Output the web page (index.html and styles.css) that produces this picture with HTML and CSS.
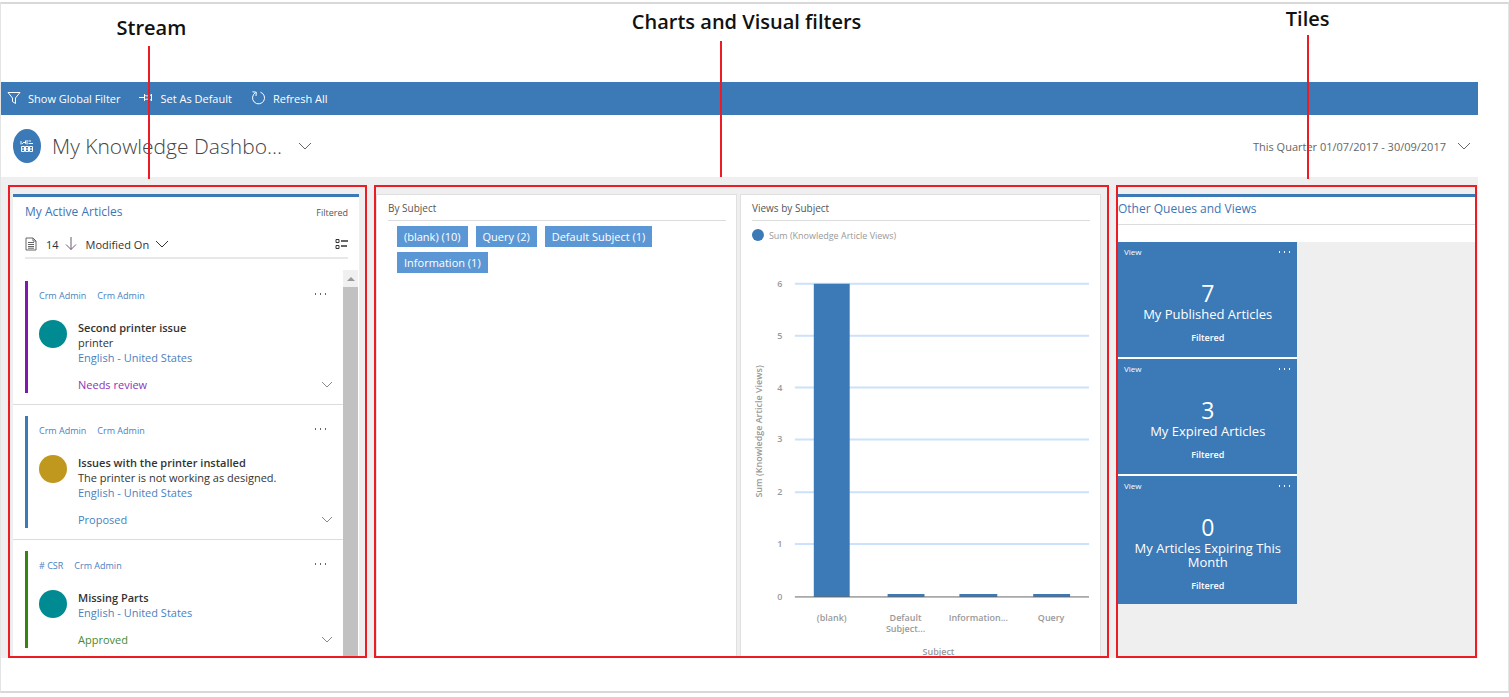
FILE: index.html
```html
<!DOCTYPE html>
<html lang="en">
<head>
<meta charset="utf-8">
<title>My Knowledge Dashboard</title>
<link rel="stylesheet" href="styles.css">
</head>
<body>
<div class="figure">
  <div class="app">
    <nav class="commands">
      <button class="command" type="button">
        <svg class="icon" width="14" height="14" viewBox="0 0 14 14"><path d="M1 1.500H13L8.500 7V12.500L5.500 10.500V7Z"/></svg>
        Show Global Filter
      </button>
      <button class="command" type="button">
        <svg class="icon" width="14" height="14" viewBox="0 0 14 14"><path d="M0 6.500H5M5.500 3V10M5.500 4C7 5.500 9 5 12 4M5.500 9C7 7.500 9 8 12 9M12.500 3V10"/></svg>
        Set As Default
      </button>
      <button class="command" type="button">
        <svg class="icon" width="15" height="16" viewBox="0 0 15 16"><path d="M9.500 2.200A6 6 0 1 1 4.500 2.700M1.500 1.800L5.300 2.200L5 6"/></svg>
        Refresh All
      </button>
    </nav>
    <header class="titlebar">
      <div class="badge">
        <svg width="14" height="14" viewBox="0 0 14 14"><path d="M1 2V5.500M2 5L4 3L5.500 4.500V1.500M7 1V5.500M8.500 2H11M8.500 4.500H13M1.500 7.500H4.500V12.500H1.500ZM5.500 7.500H8.500V12.500H5.500ZM9.500 7.500H12.500V12.500H9.500ZM1.500 10H12.500"/></svg>
      </div>
      <h1 class="title">My Knowledge Dashbo...</h1>
      <button class="chevron" type="button" aria-label="Switch dashboard"><svg width="14" height="8" viewBox="0 0 14 8"><path d="M1 1L7 7L13 1"/></svg></button>
      <button class="period" type="button">This Quarter 01/07/2017 - 30/09/2017
        <svg width="14" height="8" viewBox="0 0 14 8"><path d="M1 1L7 7L13 1"/></svg></button>
    </header>

    <main class="workspace">
      <section class="region stream-region">
        <span class="callout-text">Stream</span><span class="callout-line"></span>
        <div class="stream">
          <div class="stream-head">
            <h2 class="heading">My Active Articles</h2>
            <span class="filtered">Filtered</span>
          </div>
          <div class="sort">
            <svg class="doc" width="12" height="14" viewBox="0 0 12 14"><path d="M1 1H8L11 4V13H1ZM8 1V4H11M3 5.500H9M3 7.500H9M3 9.500H9M3 11.200H9"/></svg>
            <span class="count">14</span>
            <svg class="arrow" width="12" height="14" viewBox="0 0 12 14"><path d="M6 0V12.500M1 7.500L6 12.500L11 7.500"/></svg>
            <button class="sort-by" type="button">Modified On
              <svg width="14" height="8" viewBox="0 0 14 8"><path d="M1 1L7 7L13 1"/></svg></button>
            <button class="layout" type="button" aria-label="Change layout"><svg width="13" height="12" viewBox="0 0 13 12"><path d="M1 1.500H4V4.500H1ZM1 7.500H4V10.500H1Z"/><path d="M6 3H13M6 8H12" stroke-width="1.500"/></svg></button>
          </div>
          <div class="list">
            <div class="cards">
              <article class="card">
                <div class="card-body review">
                  <div class="tags"><a href="#">Crm Admin</a><a href="#">Crm Admin</a><button class="more" type="button" aria-label="More"></button></div>
                  <div class="entry"><span class="avatar teal"></span>
                    <div><h3>Second printer issue</h3><p>printer</p><a href="#">English - United States</a></div></div>
                  <div class="status">Needs review<button class="expand" type="button" aria-label="Expand"><svg width="12" height="7" viewBox="0 0 12 7"><path d="M1 1L6 6L11 1"/></svg></button></div>
                </div>
              </article>
              <article class="card">
                <div class="card-body proposed">
                  <div class="tags"><a href="#">Crm Admin</a><a href="#">Crm Admin</a><button class="more" type="button" aria-label="More"></button></div>
                  <div class="entry"><span class="avatar gold"></span>
                    <div><h3>Issues with the printer installed</h3><p>The printer is not working as designed.</p><a href="#">English - United States</a></div></div>
                  <div class="status">Proposed<button class="expand" type="button" aria-label="Expand"><svg width="12" height="7" viewBox="0 0 12 7"><path d="M1 1L6 6L11 1"/></svg></button></div>
                </div>
              </article>
              <article class="card">
                <div class="card-body approved">
                  <div class="tags"><a href="#"># CSR</a><a href="#">Crm Admin</a><button class="more" type="button" aria-label="More"></button></div>
                  <div class="entry"><span class="avatar teal"></span>
                    <div><h3>Missing Parts</h3><a href="#">English - United States</a></div></div>
                  <div class="status">Approved<button class="expand" type="button" aria-label="Expand"><svg width="12" height="7" viewBox="0 0 12 7"><path d="M1 1L6 6L11 1"/></svg></button></div>
                </div>
              </article>
            </div>
            <div class="scrollbar"><div class="scroll-up"><svg width="8" height="4" viewBox="0 0 8 4"><path d="M0 4L4 0L8 4Z"/></svg></div><div class="thumb"></div></div>
          </div>
        </div>
      </section>

      <section class="region charts-region">
        <span class="callout-text">Charts and Visual filters</span><span class="callout-line"></span>
        <div class="panel">
          <h2 class="panel-title">By Subject</h2>
          <div class="chips">
            <button type="button">(blank) (10)</button><button type="button">Query (2)</button><button type="button">Default Subject (1)</button><button type="button">Information (1)</button>
          </div>
        </div>
        <div class="panel">
          <h2 class="panel-title">Views by Subject</h2>
          <svg class="chart" viewBox="0 0 360 436">
            <circle cx="17" cy="14" r="6" class="bar"/>
            <text x="28" y="18">Sum (Knowledge Article Views)</text>
            <path class="grid" d="M54 63H349M54 115H349M54 167H349M54 219H349M54 272H349M54 324H349"/>
            <g text-anchor="middle" class="ticks">
              <text x="39" y="66">6</text><text x="39" y="118">5</text><text x="39" y="170">4</text><text x="39" y="222">3</text><text x="39" y="275">2</text><text x="39" y="327">1</text><text x="39" y="380">0</text>
            </g>
            <path class="bar" d="M73 63H109V377H73ZM147 374H184V377H147ZM219 374H257V377H219ZM293 374H330V377H293Z"/>
            <path class="axis" d="M54 377H349"/>
            <g text-anchor="middle" class="labels">
              <text x="91" y="401">(blank)</text>
              <text x="165" y="401">Default</text><text x="165" y="412">Subject...</text>
              <text x="238" y="401">Information...</text>
              <text x="311" y="401">Query</text>
              <text x="198" y="435">Subject</text>
              <text transform="translate(21 211) rotate(-90)">Sum (Knowledge Article Views)</text>
            </g>
          </svg>
        </div>
      </section>

      <section class="region tiles-region">
        <span class="callout-text">Tiles</span><span class="callout-line"></span>
        <div class="tiles-head"><h2 class="heading">Other Queues and Views</h2></div>
        <div class="tiles">
          <article class="tile"><div class="tile-top">View<button class="more" type="button" aria-label="More"></button></div><strong>7</strong><h3>My Published Articles</h3><p>Filtered</p></article>
          <article class="tile"><div class="tile-top">View<button class="more" type="button" aria-label="More"></button></div><strong>3</strong><h3>My Expired Articles</h3><p>Filtered</p></article>
          <article class="tile"><div class="tile-top">View<button class="more" type="button" aria-label="More"></button></div><strong>0</strong><h3>My Articles Expiring This Month</h3><p>Filtered</p></article>
        </div>
      </section>
    </main>
  </div>
</div>
</body>
</html>
```

FILE: styles.css
```css
* { box-sizing: border-box; }
body { margin: 0; padding-top: 2px; background: #fff; color: #333; font: 11px/15px "Open Sans", "Noto Sans", sans-serif; }
h1, h2, h3, p { margin: 0; font-size: inherit; font-weight: 400; }
a { color: #4a7fc0; text-decoration: none; }
button { padding: 0; border: 0; background: none; color: inherit; font: inherit; display: flex; align-items: center; }
svg { display: block; flex: none; fill: none; stroke: currentColor; }

.figure { border: 1px solid #e4e4e4; border-width: 2px 1px; border-top-color: #d8d8d8; border-bottom-color: #d8d8d8; padding: 78px 30px 33px 0; }

.commands { display: flex; gap: 19px; height: 33px; padding: 0 0 1px 6px; background: #3b79b7; color: #fff; }
.command { gap: 7px; }
.titlebar { display: flex; align-items: center; height: 62px; padding: 0 7px 0 12px; }
.badge { display: grid; place-items: center; width: 28px; height: 34px; border-radius: 50%; background: #3b79b7; color: #fff; }
.title { margin: 0 16px 0 11px; color: #444; font-size: 21px; line-height: 30px; font-weight: 300; }
.chevron { color: #666; }
.period { gap: 11px; margin-left: auto; color: #666; }

.workspace { display: grid; grid-template-columns: 359fr 735fr 361fr; gap: 7px; padding: 8px 1px 0 7px; background: #efefef; }
.region { position: relative; min-width: 0; border: 2px solid #ed1c24; padding-top: 7px; }
.callout-text { position: absolute; color: #111; font-size: 20px; line-height: 26px; font-weight: 600; white-space: nowrap; }
.callout-line { position: absolute; width: 2px; background: #ed1c24; }
.stream-region .callout-text { bottom: calc(100% + 146px); left: 30%; }
.stream-region .callout-line { bottom: calc(100% + 8px); left: 39%; height: 133px; }
.charts-region .callout-text { bottom: calc(100% + 152px); left: 35%; }
.charts-region .callout-line { bottom: calc(100% + 10px); left: 47%; height: 136px; }
.tiles-region .callout-text { bottom: calc(100% + 155px); left: 47%; }
.tiles-region .callout-line { bottom: calc(100% + 8px); left: 53%; height: 144px; }

.stream-region { padding-left: 3px; padding-right: 6px; }
.stream { border-top: 3px solid #3b79b7; background: #fff; }
.stream-head { display: flex; justify-content: space-between; align-items: center; height: 30px; margin: 0 11px 0 12px; }
.heading { color: #3f74b5; font-size: 12px; line-height: 16px; }
.filtered { color: #555; font-size: 9px; }
.sort { display: flex; align-items: center; height: 32px; margin: 0 11px 0 12px; padding-top: 4px; border-bottom: 2px solid #e8e8e8; }
.doc { color: #666; }
.count { margin: 0 6px 0 9px; }
.arrow { color: #6b5875; }
.sort-by { gap: 6px; margin-left: 9px; }
.layout { margin-left: auto; }
.list { display: flex; margin-top: 11px; }
.cards { flex: 1; min-width: 0; }
.card { padding: 11px 0 11px 12px; border-bottom: 1px solid #dcdcdc; }
.card:last-child { border-bottom: 0; padding-bottom: 8px; }
.card-body { border-left: 3px solid; padding: 7px 10px 0 11px; }
.review { border-color: #8018b0; }
.proposed { border-color: #3b79b7; }
.approved { border-color: #35850f; }
.tags { display: flex; gap: 11px; font-size: 9px; }
.more { width: 15px; height: 12px; margin-left: auto; background: radial-gradient(circle, #666 1px, transparent 1px) 0 0 / 5px 12px; }
.tags .more { margin-right: 5px; }
.entry { display: flex; gap: 11px; padding-top: 17px; }
.entry h3 { font-weight: 600; }
.avatar { flex: none; width: 28px; height: 28px; border-radius: 50%; }
.teal { background: #008b92; }
.gold { background: #c0981e; }
.status { display: flex; justify-content: space-between; align-items: center; height: 28px; padding: 10px 0 0 39px; }
.review .status { color: #8e35b8; }
.proposed .status { color: #4a7fc0; }
.approved .status { color: #458a30; }
.expand { color: #888; }
.scrollbar { display: flex; flex-direction: column; width: 16px; padding-right: 1px; }
.scroll-up { display: grid; place-items: center; height: 17px; background: #f0f0f0; }
.scroll-up svg { fill: #999; stroke: none; }
.thumb { flex: 1; background: #c1c1c1; }

.charts-region { display: grid; grid-template-columns: 1fr 1fr; gap: 3px; padding-right: 6px; }
.panel { min-width: 0; border: 1px solid #e0e0e0; border-bottom: 0; background: #fff; }
.panel-title { margin: 0 10px 0 11px; padding: 6px 0 4px; border-bottom: 1px solid #dcdcdc; color: #555; font-size: 10px; line-height: 15px; }
.chips { display: flex; flex-wrap: wrap; gap: 5px 8px; padding: 5px 20px; }
.chips button { height: 21px; padding: 0 7px; background: #5b97d5; color: #fff; }
.chart { width: 100%; font-size: 9px; }
.chart text { fill: #999; stroke: none; }
.chart .ticks { font-weight: 600; }
.chart .labels { font-weight: 600; }
.chart .bar { fill: #3b79b7; stroke: none; }
.chart .grid { stroke: #cce1fb; stroke-width: 2; }
.chart .axis { stroke: #666; }

.tiles-head { border-top: 3px solid #3b79b7; height: 48px; background: #fff; }
.tiles-head .heading { height: 28px; padding-top: 4px; border-bottom: 1px solid #dcdcdc; }
.tiles { display: grid; gap: 2px; width: 50%; background: #fff; }
.tile { min-height: 115px; padding: 2px 5px 11px 6px; background: #3b79b7; color: #fff; text-align: center; }
.tile-top { display: flex; align-items: center; font-size: 8px; }
.tile .more { width: 15px; background-image: radial-gradient(circle, #fff 1px, transparent 1px); }
.tile strong { display: block; padding-top: 20px; font-size: 23px; line-height: 28px; font-weight: 400; }
.tile h3 { font-size: 13px; line-height: 14px; }
.tile p { padding-top: 9px; font-size: 9px; font-weight: 600; }
```
